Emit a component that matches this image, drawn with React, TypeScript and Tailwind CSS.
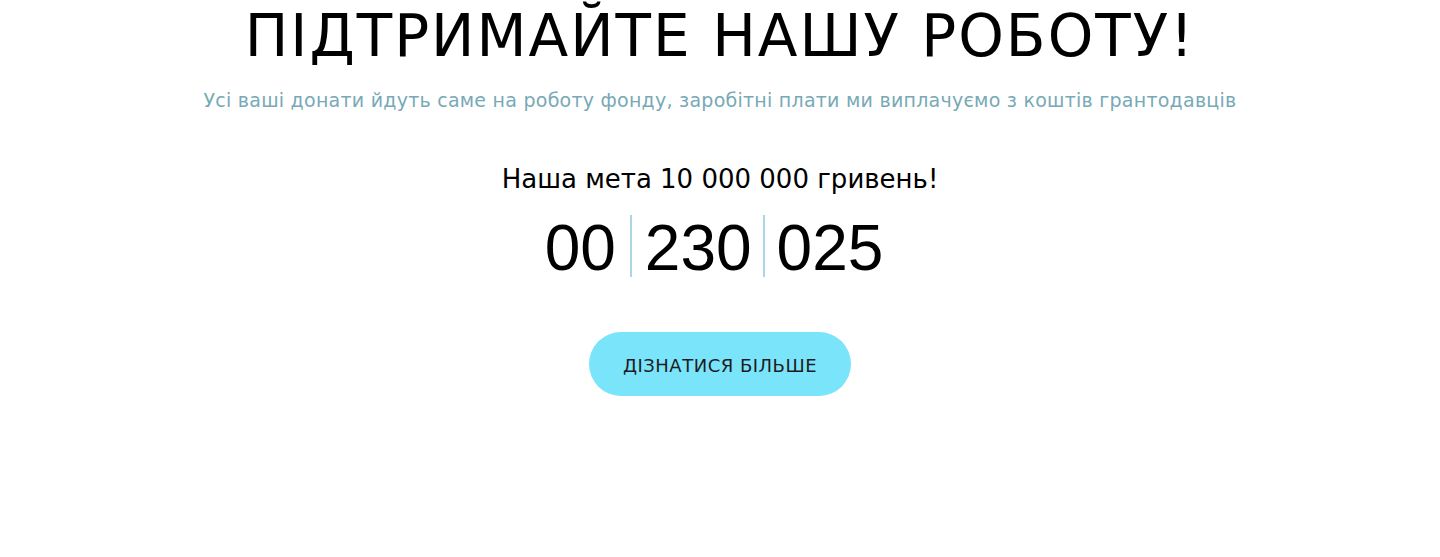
export default function App() {
  return (
    <main className="min-h-[557px] bg-white" style={{ fontFamily: '"DejaVu Sans", "Open Sans", sans-serif' }}>
      <section className="flex flex-col items-center text-center">
        <h1 className="text-[58px] font-normal leading-[72px] tracking-[2px] text-black">ПІДТРИМАЙТЕ НАШУ РОБОТУ!</h1>
        <p className="mt-[14px] text-[19px] leading-[28px] tracking-[0.25px] text-[#77a9b6]">
          Усі ваші донати йдуть саме на роботу фонду, заробітні плати ми виплачуємо з коштів грантодавців
        </p>
        <p className="mt-[48px] text-[26px] leading-[34px] text-black">Наша мета 10 000 000 гривень!</p>
        <div className="mt-[19px] flex items-start pr-[12px]" style={{ fontFamily: '"Liberation Sans", sans-serif' }}>
          <span className="pr-[14px] text-[64px] leading-[66px] text-black">00</span>
          <span className="h-[62px] w-[2px] bg-[#a9d7e5]" />
          <span className="pl-[13px] pr-[11px] text-[64px] leading-[66px] text-black">230</span>
          <span className="h-[62px] w-[2px] bg-[#a9d7e5]" />
          <span className="pl-[12px] text-[64px] leading-[66px] text-black">025</span>
        </div>
        <a href="#" className="mt-[51px] flex h-[64px] w-[262px] items-center justify-center rounded-full bg-[#7ae4fb] pt-[2px] text-[18px] tracking-[0.5px] text-[#1c1c1c]">
          ДІЗНАТИСЯ БІЛЬШЕ
        </a>
      </section>
    </main>
  )
}
